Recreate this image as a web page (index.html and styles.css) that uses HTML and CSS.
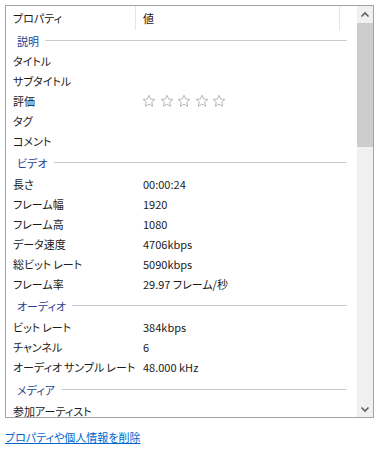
FILE: index.html
```html
<!DOCTYPE html>
<html lang="ja">
<head>
<meta charset="utf-8">
<title>詳細</title>
<link rel="stylesheet" href="styles.css">
</head>
<body>
<div class="panel">
  <div class="list">
    <div class="header">
      <div class="hcol hcol-name">プロパティ</div>
      <div class="hcol hcol-value">値</div>
      <div class="hcol hcol-rest"></div>
    </div>

    <div class="group group-first"><span class="gtitle">説明</span><span class="rule"></span></div>
    <div class="row"><span class="k">タイトル</span><span class="v"></span></div>
    <div class="row"><span class="k">サブタイトル</span><span class="v"></span></div>
    <div class="row"><span class="k">評価</span>
      <span class="v stars">
        <svg class="star" viewBox="0 0 14 14"><path d="M7 1.2 L8.7 5.1 L12.9 5.4 L9.7 8.1 L10.7 12.3 L7 10.1 L3.3 12.3 L4.3 8.1 L1.1 5.4 L5.3 5.1 Z"/></svg>
        <svg class="star" viewBox="0 0 14 14"><path d="M7 1.2 L8.7 5.1 L12.9 5.4 L9.7 8.1 L10.7 12.3 L7 10.1 L3.3 12.3 L4.3 8.1 L1.1 5.4 L5.3 5.1 Z"/></svg>
        <svg class="star" viewBox="0 0 14 14"><path d="M7 1.2 L8.7 5.1 L12.9 5.4 L9.7 8.1 L10.7 12.3 L7 10.1 L3.3 12.3 L4.3 8.1 L1.1 5.4 L5.3 5.1 Z"/></svg>
        <svg class="star" viewBox="0 0 14 14"><path d="M7 1.2 L8.7 5.1 L12.9 5.4 L9.7 8.1 L10.7 12.3 L7 10.1 L3.3 12.3 L4.3 8.1 L1.1 5.4 L5.3 5.1 Z"/></svg>
        <svg class="star" viewBox="0 0 14 14"><path d="M7 1.2 L8.7 5.1 L12.9 5.4 L9.7 8.1 L10.7 12.3 L7 10.1 L3.3 12.3 L4.3 8.1 L1.1 5.4 L5.3 5.1 Z"/></svg>
      </span>
    </div>
    <div class="row"><span class="k">タグ</span><span class="v"></span></div>
    <div class="row"><span class="k">コメント</span><span class="v"></span></div>

    <div class="group"><span class="gtitle">ビデオ</span><span class="rule"></span></div>
    <div class="row"><span class="k">長さ</span><span class="v">00:00:24</span></div>
    <div class="row"><span class="k">フレーム幅</span><span class="v">1920</span></div>
    <div class="row"><span class="k">フレーム高</span><span class="v">1080</span></div>
    <div class="row"><span class="k">データ速度</span><span class="v">4706kbps</span></div>
    <div class="row"><span class="k">総ビット レート</span><span class="v">5090kbps</span></div>
    <div class="row"><span class="k">フレーム率</span><span class="v">29.97 フレーム/秒</span></div>

    <div class="group"><span class="gtitle">オーディオ</span><span class="rule"></span></div>
    <div class="row"><span class="k">ビット レート</span><span class="v">384kbps</span></div>
    <div class="row"><span class="k">チャンネル</span><span class="v">6</span></div>
    <div class="row"><span class="k">オーディオ サンプル レート</span><span class="v">48.000 kHz</span></div>

    <div class="group group-last"><span class="gtitle">メディア</span><span class="rule"></span></div>
    <div class="row"><span class="k">参加アーティスト</span><span class="v"></span></div>
  </div>
  <div class="scrollbar">
    <div class="sb-btn">
      <svg viewBox="0 0 16 16"><path d="M4.5 9.5 L8 6 L11.5 9.5"/></svg>
    </div>
    <div class="sb-thumb"></div>
    <div class="sb-track"></div>
    <div class="sb-btn">
      <svg viewBox="0 0 16 16"><path d="M4.5 6.5 L8 10 L11.5 6.5"/></svg>
    </div>
  </div>
</div>
<div class="footer">
  <a class="link" href="#">プロパティや個人情報を削除</a>
</div>
</body>
</html>
```

FILE: styles.css
```css
html, body {
  margin: 0;
  padding: 0;
  background: #ffffff;
}

body {
  font-family: "Noto Sans CJK JP", "Noto Sans", sans-serif;
  font-size: 11px;
  color: #1a1a1a;
  font-feature-settings: "palt" 1;
  width: 379px;
  height: 456px;
  overflow: hidden;
}

.panel {
  margin: 5px 0 0 5px;
  width: 367px;
  height: 411px;
  border: 1px solid #a3a3a3;
  display: flex;
  overflow: hidden;
}

.list {
  flex: 1;
  display: flex;
  flex-direction: column;
  overflow: hidden;
  min-width: 0;
}

.header {
  display: flex;
  height: 24px;
  flex: none;
}

.hcol {
  display: flex;
  align-items: center;
  padding-left: 7px;
  box-sizing: border-box;
  line-height: 1;
}

.hcol-name {
  width: 130px;
  border-right: 1px solid #e5e5e5;
}

.hcol-value {
  width: 204px;
  border-right: 1px solid #e5e5e5;
}

.hcol-rest {
  flex: 1;
}

.group {
  display: flex;
  align-items: center;
  height: 23px;
  flex: none;
  padding-left: 11px;
  padding-right: 10px;
}

.group-first {
  height: 21px;
}

.group-last {
  height: 24px;
  padding-top: 1px;
  box-sizing: border-box;
}

.gtitle {
  color: #2a3f8f;
  white-space: nowrap;
}

.rule {
  flex: 1;
  height: 1px;
  background: #c8cbd1;
  margin-left: 6px;
}

.row {
  display: flex;
  align-items: center;
  height: 20px;
  flex: none;
  white-space: nowrap;
}

.k {
  width: 130px;
  padding-left: 7px;
  word-spacing: -0.5px;
}

.v {
  flex: 1;
}

.stars {
  display: flex;
  gap: 3.5px;
  margin-left: -1px;
}

.star {
  width: 14px;
  height: 14px;
  fill: #ffffff;
  stroke: #b8b8b8;
  stroke-width: 1;
  stroke-linejoin: round;
}

.scrollbar {
  width: 16px;
  flex: none;
  display: flex;
  flex-direction: column;
  background: #f0f0f0;
}

.sb-btn {
  height: 17px;
  flex: none;
  display: flex;
  align-items: center;
  justify-content: center;
}

.sb-btn svg {
  width: 16px;
  height: 16px;
  fill: none;
  stroke: #606060;
  stroke-width: 1.6;
}

.sb-thumb {
  height: 124px;
  flex: none;
  background: #cdcdcd;
}

.sb-track {
  flex: 1;
}

.footer {
  padding: 11px 0 0 5px;
}

.link {
  color: #0066cc;
  text-decoration: underline;
  font-size: 11px;
}
```
